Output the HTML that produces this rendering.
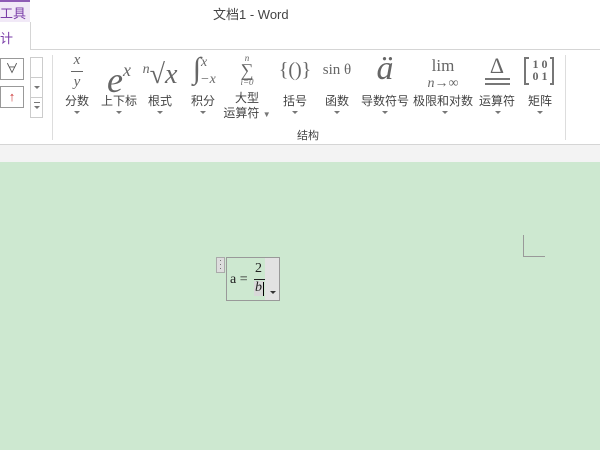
<!DOCTYPE html><html><head><meta charset="utf-8"><style>
body{margin:0;width:600px;height:450px;overflow:hidden;position:relative;background:#fff;font-family:"Liberation Sans","Noto Sans CJK SC",sans-serif;color:#444}
.a{position:absolute}
.lbl{position:absolute;font-size:12px;color:#444;text-align:center;white-space:nowrap;transform:translateX(-50%)}
.ar{position:absolute;width:0;height:0;border-left:3px solid transparent;border-right:3px solid transparent;border-top:3px solid #777;transform:translateX(-50%)}
.ic{position:absolute;transform:translateX(-50%);font-family:"Liberation Serif",serif;color:#666;font-style:italic;white-space:nowrap;text-align:center}
</style></head><body>
<div class="a" style="left:0;top:0;width:30px;height:22px;background:#f1e9f7;border-top:2px solid #8e5bb5;box-sizing:border-box"></div>
<div class="a" style="left:0;top:3px;font-size:13px;color:#7a3da8">工具</div>
<div class="a" style="left:0;top:22px;width:30px;height:28px;background:#fff;border-right:1px solid #d5d5d5"></div>
<div class="a" style="left:0;top:28px;font-size:13px;color:#7a3da8">计</div>
<div class="a" style="left:213px;top:4px;font-size:13px;color:#444">文档1 - Word</div>
<div class="a" style="left:30px;top:49px;width:570px;height:1px;background:#d5d5d5"></div>
<div class="a" style="left:0;top:144px;width:600px;height:1px;background:#d5d5d5"></div>
<div class="a" style="left:0;top:145px;width:600px;height:17px;background:#f3f3f3"></div>
<div class="a" style="left:0;top:162px;width:600px;height:288px;background:#cde8d0"></div>
<div class="a" style="left:0;top:58px;width:24px;height:22px;border:1px solid #999;box-sizing:border-box;font-size:13px;text-align:center;line-height:20px;color:#555">∀</div>
<div class="a" style="left:0;top:86px;width:24px;height:22px;border:1px solid #999;box-sizing:border-box;font-size:13px;text-align:center;line-height:20px;color:#c33">↑</div>
<div class="a" style="left:30px;top:57px;width:13px;height:61px;border:1px solid #ccc;box-sizing:border-box"></div>
<div class="a" style="left:30px;top:77px;width:13px;height:1px;background:#ccc"></div>
<div class="a" style="left:30px;top:97px;width:13px;height:1px;background:#ccc"></div>
<div class="ar" style="left:37px;top:86px"></div>
<div class="ar" style="left:37px;top:106px"></div>
<div class="a" style="left:34px;top:102px;width:6px;height:1px;background:#777"></div>
<div class="a" style="left:52px;top:55px;width:1px;height:85px;background:#ddd"></div>
<div class="a" style="left:565px;top:55px;width:1px;height:85px;background:#ddd"></div>

<div class="ic" style="left:77px;top:55px;font-size:15px;line-height:11px">x<br><span style="display:inline-block;border-top:1px solid #666;width:12px;vertical-align:middle"></span><br>y</div>
<div class="ic" style="left:119px;top:50px;font-size:36px;line-height:40px">e<sup style="font-size:18px;vertical-align:16px">x</sup></div>
<div class="ic" style="left:160px;top:54px;font-size:28px;line-height:32px"><sup style="font-size:14px;vertical-align:10px">n</sup>√x</div>
<div class="ic" style="left:200px;top:52px;font-size:30px;line-height:34px">∫<span style="font-size:14px;position:relative;top:-12px">x</span></div>
<div class="ic" style="left:208px;top:72px;font-size:14px">−x</div>
<div class="ic" style="left:247px;top:54px;font-size:9px;line-height:9px">n<br><span style="font-size:18px;font-style:normal;line-height:14px">∑</span><br>i=0</div>
<div class="ic" style="left:295px;top:59px;font-size:20px;font-style:normal">{()}</div>
<div class="ic" style="left:337px;top:62px;font-size:15px;font-style:normal">sin θ</div>
<div class="ic" style="left:385px;top:50px;font-size:34px;line-height:38px">ä</div>
<div class="ic" style="left:443px;top:58px;font-size:17px;font-style:normal;line-height:16px">lim<br><span style="font-size:14px"><i>n</i>→∞</span></div>
<div class="ic" style="left:497px;top:53px;font-size:22px;font-style:normal">Δ</div>
<div class="a" style="left:485px;top:78px;width:25px;height:2px;background:#777"></div>
<div class="a" style="left:485px;top:83px;width:25px;height:2px;background:#777"></div>
<div class="a" style="left:524px;top:57px;width:30px;height:28px;border:2px solid #777;box-sizing:border-box"></div>
<div class="a" style="left:529px;top:55px;width:21px;height:32px;background:#fff"></div>
<div class="ic" style="left:540px;top:58px;font-size:12px;font-style:normal;font-weight:bold;line-height:12px">1 0<br>0 1</div>

<div class="lbl" style="left:77px;top:92px">分数</div>
<div class="lbl" style="left:119px;top:92px">上下标</div>
<div class="lbl" style="left:160px;top:92px">根式</div>
<div class="lbl" style="left:203px;top:92px">积分</div>
<div class="lbl" style="left:247px;top:91px;line-height:15px">大型<br>运算符 <span style="font-size:8px;color:#777">▼</span></div>
<div class="lbl" style="left:295px;top:92px">括号</div>
<div class="lbl" style="left:337px;top:92px">函数</div>
<div class="lbl" style="left:385px;top:92px">导数符号</div>
<div class="lbl" style="left:443px;top:92px">极限和对数</div>
<div class="lbl" style="left:497px;top:92px">运算符</div>
<div class="lbl" style="left:540px;top:92px">矩阵</div>
<div class="ar" style="left:77px;top:111px"></div><div class="ar" style="left:119px;top:111px"></div><div class="ar" style="left:160px;top:111px"></div><div class="ar" style="left:203px;top:111px"></div><div class="ar" style="left:295px;top:111px"></div><div class="ar" style="left:337px;top:111px"></div><div class="ar" style="left:385px;top:111px"></div><div class="ar" style="left:445px;top:111px"></div><div class="ar" style="left:498px;top:111px"></div><div class="ar" style="left:540px;top:111px"></div>
<div class="lbl" style="left:308px;top:127px;font-size:11px">结构</div>

<div class="a" style="left:523px;top:235px;width:1px;height:21px;background:#999"></div>
<div class="a" style="left:523px;top:256px;width:22px;height:1px;background:#999"></div>

<div class="a" style="left:216px;top:257px;width:9px;height:16px;border:1px solid #aaa;background:#ddd;box-sizing:border-box;font-size:9px;line-height:4px;text-align:center;color:#666">·<br>·<br>·</div>
<div class="a" style="left:226px;top:257px;width:54px;height:44px;border:1px solid #999;box-sizing:border-box"></div>
<div class="a" style="left:265px;top:258px;width:14px;height:42px;background:#e2e2e2"></div>
<div class="a" style="left:270px;top:291px;width:0;height:0;border-left:3px solid transparent;border-right:3px solid transparent;border-top:3px solid #333"></div>
<div class="a" style="left:230px;top:272px;font-size:14px;color:#222;font-family:'Liberation Serif',serif">a = </div>
<div class="a" style="left:255px;top:261px;font-size:14px;color:#222;font-family:'Liberation Serif',serif">2</div>
<div class="a" style="left:254px;top:279px;width:11px;height:1px;background:#222"></div>
<div class="a" style="left:254px;top:281px;width:10px;height:15px;background:#d8d8d8"></div>
<div class="a" style="left:255px;top:280px;font-size:14px;color:#222;font-style:italic;font-family:'Liberation Serif',serif">b</div>
<div class="a" style="left:263px;top:282px;width:1px;height:14px;background:#000"></div>
</body></html>
